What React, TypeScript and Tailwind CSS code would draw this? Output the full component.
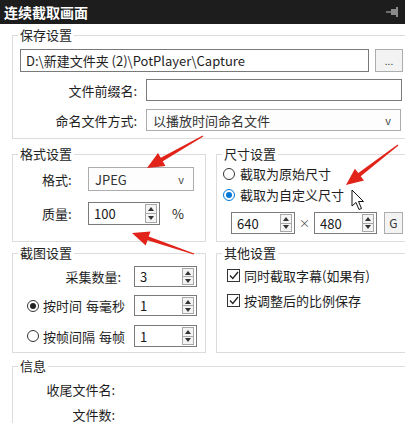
import React from 'react';

const font = { fontFamily: '"Noto Sans CJK SC", "Noto Sans", sans-serif' };

// red annotation arrow: tapered shaft + head, drawn from tail to tip
const arrowPoints = (tx: number, ty: number, px: number, py: number) => {
  const dx = px - tx;
  const dy = py - ty;
  const len = Math.sqrt(dx * dx + dy * dy);
  const ux = dx / len;
  const uy = dy / len;
  const nx = -uy;
  const ny = ux;
  const headLen = 17;
  const headW = 7.5;
  const bx = px - ux * headLen;
  const by = py - uy * headLen;
  const pts = [
    [tx + nx * 0.6, ty + ny * 0.6],
    [bx + nx * 2, by + ny * 2],
    [bx + nx * headW, by + ny * headW],
    [px, py],
    [bx - nx * headW, by - ny * headW],
    [bx - nx * 2, by - ny * 2],
    [tx - nx * 0.6, ty - ny * 0.6],
  ];
  return pts.map(p => `${p[0].toFixed(1)},${p[1].toFixed(1)}`).join(' ');
};

const SpinBox: React.FC<{ value: string; className: string }> = ({ value, className }) => (
  <div className={`flex shrink-0 items-stretch border border-[#7a7a7a] bg-white ${className}`}>
    <span className="flex-1 self-center pl-[5px] text-[13px] leading-none text-[#1a1a1a]">{value}</span>
    <div className="my-[1px] mr-[2px] flex w-[12px] flex-col border border-[#a8a8a8] bg-[#f4f4f4]">
      <div className="flex flex-1 items-center justify-center border-b border-[#a8a8a8]">
        <svg width="6" height="4" viewBox="0 0 6 4"><polygon points="0,4 3,0 6,4" fill="#333" /></svg>
      </div>
      <div className="flex flex-1 items-center justify-center">
        <svg width="6" height="4" viewBox="0 0 6 4"><polygon points="0,0 6,0 3,4" fill="#333" /></svg>
      </div>
    </div>
  </div>
);

const Select: React.FC<{ value: string; className: string }> = ({ value, className }) => (
  <div className={`flex shrink-0 items-center justify-between border border-[#acacac] bg-[#fdfdfd] pl-[6px] pr-[9px] ${className}`}>
    <span className="text-[13px] leading-none text-[#333]">{value}</span>
    <span className="text-[11px] leading-none text-[#444]">v</span>
  </div>
);

const Radio: React.FC<{ checked?: boolean; blue?: boolean }> = ({ checked, blue }) => (
  <span
    className={`flex h-[12px] w-[12px] shrink-0 items-center justify-center rounded-full border bg-white ${
      blue ? 'border-[#0078d7]' : 'border-[#333]'
    }`}
  >
    {checked && <span className={`h-[6px] w-[6px] rounded-full ${blue ? 'bg-[#0078d7]' : 'bg-[#222]'}`} />}
  </span>
);

const Check: React.FC = () => (
  <span className="flex h-[13px] w-[13px] shrink-0 items-center justify-center border border-[#333] bg-white">
    <svg width="10" height="9" viewBox="0 0 10 9">
      <polyline points="1,4.5 3.8,7.5 9,1" fill="none" stroke="#222" strokeWidth="1.3" />
    </svg>
  </span>
);

const Group: React.FC<{ title: string; className?: string; children?: React.ReactNode }> = ({ title, className, children }) => (
  <fieldset className={`shrink-0 border border-[#dcdcdc] ${className ?? ''}`}>
    <legend className="ml-[5px] px-[2px] text-[13px] leading-[18px] text-[#222]">{title}</legend>
    {children}
  </fieldset>
);

export default function App() {
  return (
    <div className="relative h-[423px] w-[405px] overflow-hidden bg-white text-[13px] text-[#1e1e1e]" style={font}>
      {/* Title bar */}
      <div className="flex h-[24px] items-center justify-between bg-[#1d1d1d] pl-[4px] pr-[5px]">
        <span className="text-[14px] font-bold leading-none text-white">连续截取画面</span>
        <svg width="14" height="12" viewBox="0 0 14 12">
          <line x1="0" y1="6" x2="5" y2="6" stroke="#8a8a8a" strokeWidth="1.5" />
          <rect x="5" y="3" width="5" height="6" fill="#8a8a8a" />
          <rect x="10" y="1" width="2" height="10" fill="#8a8a8a" />
        </svg>
      </div>

      <div className="pl-[12px]">
        {/* 保存设置 */}
        <Group title="保存设置" className="mt-[2px] w-[400px] pb-[7px]">
          <div className="mt-[5px] flex items-center pl-[7px]">
            <div className="flex h-[23px] w-[349px] shrink-0 items-center border border-[#7a7a7a] bg-white pl-[5px]">
              <span className="text-[13px] leading-none">D:\新建文件夹 (2)\PotPlayer\Capture</span>
            </div>
            <div className="ml-[6px] flex h-[23px] w-[28px] shrink-0 items-center justify-center border border-[#adadad] bg-[#f3f3f3]">
              <span className="text-[10px] leading-none text-[#333]">...</span>
            </div>
          </div>
          <div className="mt-[7px] flex items-center">
            <span className="w-[124px] text-right leading-none">文件前缀名:</span>
            <div className="ml-[9px] h-[22px] w-[256px] shrink-0 border border-[#7a7a7a] bg-white" />
          </div>
          <div className="mt-[8px] flex items-center">
            <span className="w-[124px] text-right leading-none">命名文件方式:</span>
            <Select value="以播放时间命名文件" className="ml-[9px] h-[22px] w-[255px]" />
          </div>
        </Group>

        {/* 格式设置 / 尺寸设置 */}
        <div className="mt-[6px] flex gap-[10px]">
          <Group title="格式设置" className="w-[194px] pb-[15px]">
            <div className="mt-[4px] flex items-center">
              <span className="w-[75px] shrink-0 pl-[29px] leading-none">格式:</span>
              <Select value="JPEG" className="h-[24px] w-[106px]" />
            </div>
            <div className="mt-[11px] flex items-center">
              <span className="w-[75px] shrink-0 pl-[29px] leading-none">质量:</span>
              <SpinBox value="100" className="h-[23px] w-[72px]" />
              <span className="ml-[12px] leading-none">%</span>
            </div>
          </Group>
          <Group title="尺寸设置" className="w-[200px] pb-[7px]">
            <div className="flex h-[21px] items-center gap-[5px] pl-[6px]">
              <Radio />
              <span className="leading-none">截取为原始尺寸</span>
            </div>
            <div className="flex h-[21px] items-center gap-[5px] pl-[6px]">
              <Radio checked blue />
              <span className="leading-none">截取为自定义尺寸</span>
            </div>
            <div className="mt-[7px] flex items-center pl-[14px]">
              <SpinBox value="640" className="h-[22px] w-[64px]" />
              <span className="w-[19px] shrink-0 text-center text-[11px] leading-none text-[#555]">×</span>
              <SpinBox value="480" className="h-[22px] w-[63px]" />
              <div className="ml-[7px] flex h-[22px] w-[19px] shrink-0 items-center justify-center border border-[#adadad] bg-[#f3f3f3]">
                <span className="text-[12px] leading-none text-[#333]">G</span>
              </div>
            </div>
          </Group>
        </div>

        {/* 截图设置 / 其他设置 */}
        <div className="mt-[2px] flex gap-[10px]">
          <Group title="截图设置" className="w-[194px] pb-[5px]">
            <div className="mt-[4px] flex items-center">
              <span className="w-[121px] shrink-0 pr-[13px] text-right leading-none">采集数量:</span>
              <SpinBox value="3" className="h-[21px] w-[63px]" />
            </div>
            <div className="mt-[8px] flex items-center">
              <div className="flex w-[121px] shrink-0 items-center justify-between pl-[14px] pr-[9px]">
                <div className="flex items-center gap-[4px]">
                  <Radio checked />
                  <span className="leading-none">按时间</span>
                </div>
                <span className="leading-none">每毫秒</span>
              </div>
              <SpinBox value="1" className="h-[21px] w-[63px]" />
            </div>
            <div className="mt-[9px] flex items-center">
              <div className="flex w-[121px] shrink-0 items-center justify-between pl-[14px] pr-[9px]">
                <div className="flex items-center gap-[4px]">
                  <Radio />
                  <span className="leading-none">按帧间隔</span>
                </div>
                <span className="leading-none">每帧</span>
              </div>
              <SpinBox value="1" className="h-[22px] w-[63px]" />
            </div>
          </Group>
          <Group title="其他设置" className="w-[200px]">
            <div className="mt-[3px] flex h-[20px] items-center gap-[4px] pl-[10px]">
              <Check />
              <span className="leading-none">同时截取字幕(如果有)</span>
            </div>
            <div className="mt-[5px] flex h-[20px] items-center gap-[4px] pl-[10px]">
              <Check />
              <span className="leading-none">按调整后的比例保存</span>
            </div>
          </Group>
        </div>

        {/* 信息 */}
        <Group title="信息" className="mt-[4px] w-[400px] pb-[20px]">
          <div className="mt-[5px] flex h-[18px] items-center">
            <span className="w-[102px] text-right leading-none">收尾文件名:</span>
          </div>
          <div className="mt-[7px] flex h-[18px] items-center">
            <span className="w-[102px] text-right leading-none">文件数:</span>
          </div>
        </Group>
      </div>

      {/* annotation arrows and mouse cursor drawn over the dialog */}
      <svg className="pointer-events-none absolute left-0 top-0" width="405" height="423" viewBox="0 0 405 423">
        <polygon points={arrowPoints(203, 136, 147, 168)} fill="#e2231a" />
        <polygon points={arrowPoints(398, 145, 346, 185)} fill="#e2231a" />
        <polygon points={arrowPoints(194, 254, 132, 233)} fill="#e2231a" />
        <path
          d="M352 190 L352 206 L356 202.5 L359 209.5 L361.5 208.5 L358.5 201.5 L363.5 201.5 Z"
          fill="#fff"
          stroke="#111"
          strokeWidth="1"
          strokeLinejoin="round"
        />
      </svg>
    </div>
  );
}
